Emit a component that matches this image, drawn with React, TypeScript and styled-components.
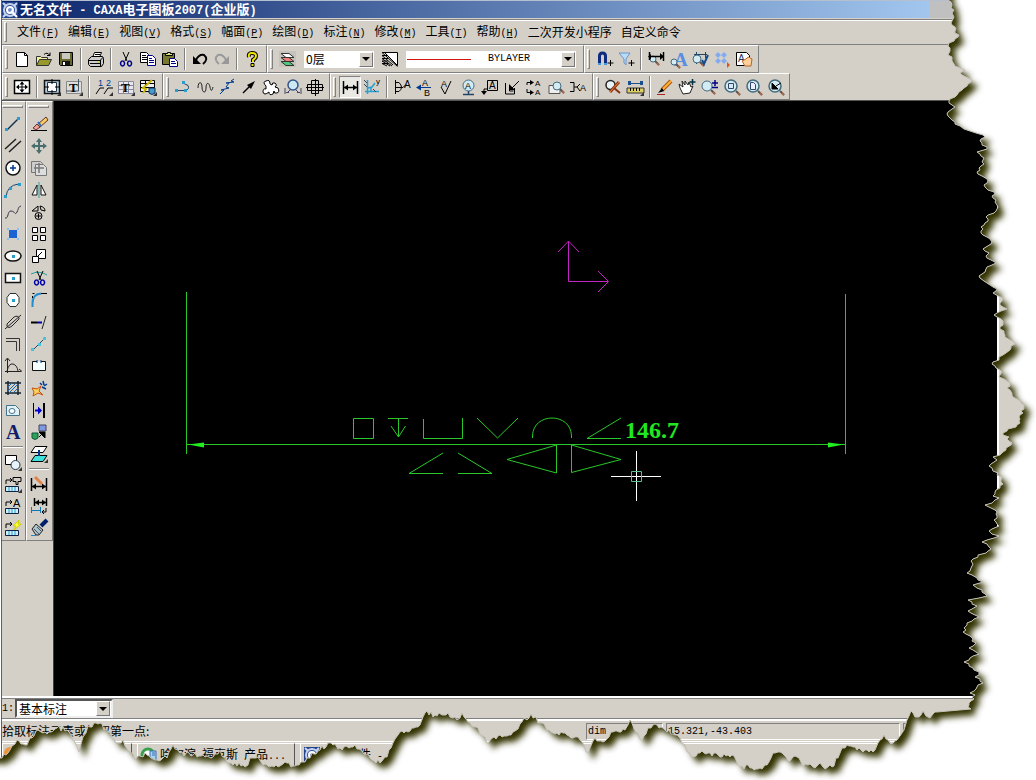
import React from 'react';
import styled, { createGlobalStyle, css } from 'styled-components';

const face = '#d4d0c8';
const shade = '#808080';
const CJK = '"Noto Sans CJK SC", sans-serif';
const MONO = '"Liberation Mono", monospace';

const Global = createGlobalStyle`
  * { box-sizing: border-box; }
  body { margin: 0; background: #fff; font: 12px/16px ${CJK}; color: #000; overflow: hidden; }
`;

/* ---------- icon data: strokes are [path, stroke, fill, width] ---------- */
type Stroke = [string, string?, string?, number?];
type Glyph = { t: string; x: number; y: number; s: number; c?: string; b?: boolean };
type Part = Stroke | Glyph;

const K = '#000';
const N = 'none';
const NAVY = '#003a90';
const CYAN = '#2b9ed0';
const corner: Stroke = ['M17 13v4h-4z', N, '#333'];
const lens = (x: number, y: number, r = 5): Part[] => [
  [`M${x + r - 1} ${y + r - 1}l4 4`, '#555', N, 2],
  [`M${x + r + 1} ${y + r + 1}l2 2`, '#b06a48', N, 2],
  [`M${x - r} ${y}a${r} ${r} 0 1 0 ${2 * r} 0a${r} ${r} 0 1 0 -${2 * r} 0z`, '#456a7c', '#d3ebf2', r > 5 ? 1.5 : 1],
];

const icons: Record<string, Part[]> = {
  new: [['M2.5 1.5h8l3 3v11h-11z', K, '#fff'], ['M10.5 1.5v3h3', K]],
  open: [['M.5 14.5v-9h4l1 1h6v2', '#333', '#f5f0a0'], ['M.5 14.5l3-6h12l-3 6z', '#333', '#98982c'], ['M8 3.5q3-3 6 1m0-3v3h-3', K]],
  save: [['M1.5 1.5h13v13h-12l-1-1z', K, '#68682c'], ['M4 2h8v6H4z', N, '#c8c8c0'], ['M4 10h8v4H4z', N, '#111'], ['M5 11h2v3H5z', N, '#fff']],
  print: [['M4.5 6.5l2-5h7l-2 5', K, '#fff'], ['M7 3.5h5M6 5.5h5', K], ['M.5 8.5l3-3h11l1 2v5l-2 3h-11l-2-2z', K, '#ccc'], ['M1 9.5h11l3-3M2 12.5h10M12.5 9v6', K], ['M9 11h3', '#cc0']],
  cut: [['M5 1l4 9M11 1L7 10', K], ['M4.5 10a2 2.5 0 1 0 .1 0M11.5 10a2 2.5 0 1 0 .1 0', '#008', N, 1.5]],
  copy: [['M.5 1.5h6l2 2v8h-8z', K, '#fff'], ['M2 4.5h4M2 6.5h5M2 8.5h5', K], ['M7.5 4.5h5l3 3v7h-8z', '#008', '#fff'], ['M9 7.5h3M9 9.5h5M9 11.5h5', '#008']],
  paste: [['M.5 2.5h12v11H.5z', K, '#77772e'], ['M3.5 4.5v-2h2v-1h3v1h2v2z', K, '#dd8'], ['M7.5 7.5h5l3 3v5h-8z', '#008', '#fff'], ['M9 10.5h4M9 12.5h5', '#008']],
  undo: [['M1 5v8h8z', N, K], ['M4 9q3-6 8-5q5 4-1 9', K, N, 2]],
  redo: [['M15 5v8H7z', N, '#999'], ['M12 9Q9 3 4 4q-5 4 1 9', '#999', N, 2]],
  help: [['M5 6q-1-4 3-4t4 3q0 2-3 4v2', K, N, 4], ['M5 6q-1-4 3-4t4 3q0 2-3 4v2', '#f2e400', N, 2], ['M7 12.5h3v3H7z', K, '#f2e400']],
  layers: [['M0 0h17v16H0z', N, '#c6c2bc'], ['M2 10.5h8l5 4H7z', '#333', '#4ec878'], ['M2 6.5h8l5 4H7z', '#333', '#f08078'], ['M2 2.5h8l5 4H7z', '#333', '#fff']],
  style: [['M3.5 1.5h13v13z', K, '#fff'], ['M16.5 15.5L1 1.5h4M12 14L1 4.5h6M11 15L1 7.5h6M9 15l-8-5h6M6 15l-5-2.500h6', K]],
  magnet: [['M3.5 13V5q0-3 3-3t3 3v8', '#102c80', N, 3], ['M2 13h3M8 13h3', '#49d', N, 2], ['M14.5 9v6M11.5 12h6', K]],
  filter: [['M1 2h11L8 8v6L6 12V8z', '#6b95cc', '#b9dcf5'], ['M13.5 9v6M10.5 12h6', K]],
  dimStyle: [...lens(5, 8, 3), ['M1.5 1v8M15.5 1v9M2 5.5h13', K, N, 1.5], ['M3 3v5L0 5.5zM12 2v7l4-3.500z', N, K]],
  textStyle: [{ t: 'A', x: 4, y: 15, s: 19, c: '#5a8ee0', b: true }, ...lens(4, 11, 3)],
  checkDim: [['M2 3.5h13M4.5 1v12M13.5 1v6', '#246'], ...lens(5, 8, 4), ['M10 9l2 4 4-9', '#124a90', N, 2]],
  points: [['M4 1l3 3-3 3-3-3zM10 1l3 3-3 3-3-3zM4 7l3 3-3 3-3-3zM10 7l3 3-3 3-3-3z', '#a8c0e4', '#86a9ea'], ['M13 11l3 3-3 3z', N, '#e05020']],
  pageHand: [['M.5 1.5h10l3 3v10H.5z', K, '#fff'], { t: 'A', x: 2, y: 11, s: 10, c: '#236' }, ['M6 10l3 5h6l1-7-2-1-1-1-2 1-1 1z', '#b56528', '#ffd09c']],

  zoomAll: [['M.5 1.5h15v13H.5z', K, '#fff', 1.5], ['M8 3v10M3 8h10', K], ['M5.500 5.5L8 2.500l2.500 3zM5.500 10.500L8 13.500l2.500-3zM5 5.500L2 8l3 2.500zM11 5.500L14 8l-3 2.500z', N, K]],
  frame: [['M.5 1.5h15v13H.5z', '#111', '#b8d0e0', 1.5], ['M3.5 3.5h9v9h-9z', '#234', '#fff'], ['M8 0v5M8 11v5M0 8h5M11 8h5', K], corner],
  titleBlock: [['M.5 2.5h15v12H.5z', '#888', '#ddd'], ['M12.5 0v12H0', '#456'], { t: 'T', x: 3, y: 13, s: 13, b: true }, corner],
  serial: [{ t: '1', x: 2, y: 7, s: 9, c: NAVY }, { t: '2', x: 10, y: 7, s: 9, c: NAVY }, ['M0 15l4-6h4M8 15l4-6h5', K], corner],
  tableText: [['M.5 2.5h15v12H.5zM1 6.5h14M1 10.5h14M5.5 3v11M10.5 3v11', '#889', '#e5e8ec'], { t: 'T', x: 3, y: 13, s: 13, b: true }, corner],
  bom: [['M.5 1.5h14v11H.5zM1 4.5h13M1 8.5h13M5.5 2v10', K, '#eee'], ['M12 1L3 9l3 1-3 4', '#c9b400', N, 2], ['M9 9h6v5q-3 3-6 0z', '#135', '#469ad0'], corner],

  pline: [['M1 11.5h9q5-1 3-5l-4-2', '#246'], ['M0 10h3v3H0zM9 10h3v3H9zM7 2h3v3H7z', N, CYAN]],
  wave: [['M1 9c0-7 4-7 4-1s4 7 4 1 3-6 4-1 2 4 3 0', '#222']],
  breakLine: [['M1 15l4-4H2l8-2-3-1 3-4H7l8-1-3-1 3-2', NAVY]],
  arrow: [['M2 14l8-8', K, N, 1.5], ['M14 2L6 6l4 4z', N, K]],
  gear: [['M3 7q-4-4 0-5 4-2 4 3l2 1q0-3 3-2 3 2 0 4l3 1q2 4-1 5-3 1-3-2l-1 3q-4 2-4-2-5 4-6 0 0-4 3-3z', K, '#fff']],
  hole: [['M3 6a5 5 0 1 0 10 0a5 5 0 1 0-10 0z', '#358', '#cdeaf4', 1.5], ['M0 9v6M16 9v6M1 13.5h3M12 13.500h3M3 13l3-3M13 13l-3-3', '#446']],
  block: [['M.5 5.5h15v6H.5zM4.5 1.5h7v13h-7z', K], ['M-1 8.5h18M8.5 0v17', K]],

  dimension: [['M1.5 2v13M15.5 2v13M2 8.5h13', K, N, 1.5], ['M2 8.5l4-3v6zM15 8.5l-4-3v6z', N, K]],
  coordDim: [['M3.5 1v14M1 12.5h14M4 9l4-1 3-4M7 13V8', CYAN, N, 1.5], ['M0 1l3 3M0 5l3 3M9 10l3 3', '#345'], { t: 'y', x: 12, y: 5, s: 8 }],
  datum: [['M1.5 1v14M2 3.5h3q5 5 0 9H2M2 8.500h7l3-3', K], { t: 'A', x: 10, y: 9, s: 10 }],
  weld: [{ t: 'A', x: 6, y: 7, s: 9 }, { t: 'B', x: 8, y: 17, s: 9 }, ['M2 8.5h13', NAVY], ['M0 8.5l5-3v6z', N, NAVY]],
  rough: [['M3 8l4 7L13 2', K], { t: 'A', x: 3, y: 8, s: 9 }],
  tolerance: [['M3 6.500a5.500 5.500 0 1 0 11 0a5.500 5.500 0 1 0-11 0z', '#456a7c', '#d3ebf2'], { t: 'A', x: 5, y: 10, s: 9 }, ['M8.5 12v3M3 15.5h11', '#246', N, 1.5]],
  datumBox: [['M5.5 1.5h10v10h-10zM5 10H2v5', K], { t: 'A', x: 7, y: 10, s: 10 }, ['M-1 12h6l-3 4z', N, K]],
  surface: [['M1.5 4v11h9V9M5.5 6v6h4M15 2l-8 8', K], ['M5 11V5l6 6z', N, K]],
  replace: [['M1 6V3.5h4M1 10v3.500h4', K, N, 1], ['M4 1l4 2.500L4 6zM4 11l4 2.500L4 16z', N, K], { t: 'A', x: 9, y: 7, s: 8 }, { t: 'A', x: 9, y: 16, s: 8 }],
  find: [['M1 6.5h11v8H1z', '#555', '#eee'], ...lens(9, 7, 4)],
  editDim: [['M0 3.5h4v9H0M4 8h3m3-3L7 8l3 4', K], { t: 'A', x: 10, y: 12, s: 9 }],
  inspect: [['M1 6a4.500 4.500 0 1 0 9 0a4.500 4.500 0 1 0-9 0z', '#222', '#e8f4f8', 1.5], ['M5 13l9-10', '#8e3410', N, 3], ['M5 13l9-10', '#ee8640'], ['M9 9l6 5', '#8a3010', N, 2]],
  ruler: [['M2 4.5h13', '#17508c'], ['M1 2h3v4H1zM13 2h3v4h-3z', N, '#17508c'], ['M0 9h17v5H0z', '#333', '#ded060'], ['M3.5 9v3M6.5 9v3M9.5 9v3M12.5 9v3', K], corner],
  pen: [['M14 2L5 11', '#a85808', N, 4], ['M14 2L5 11', '#ffb03a', N, 2], ['M5 9L1 14l6-2z', N, K], ['M0 15.5h8', '#a22']],
  pan: [['M4 15L1 9l-1-4 4 3-1-6 3 4V2l3 4 1-3 2 5 2-1-3 7z', '#222', '#fff'], ['M13.5 0v6M10.5 3h6', '#034', N, 1.5]],
  zoomPM: [...lens(6, 7, 5), ['M14 1v6M11 4h6M11 8.5h6', '#008', N, 1.5]],
  zoomWin: [...lens(8, 7, 6), ['M5.5 4.5h5v5h-5z', '#346']],
  zoomPage: [...lens(8, 7, 6), ['M5.5 3.5h3l2 2v5h-5z', '#346', '#eef']],
  zoomPrev: [...lens(8, 7, 6), ['M5 4v6h6zM9 7l5-3', K, K]],

  line: [['M2 14L14 2', '#12304e', N, 1.5], ['M0 12h3v3H0zM12 1h3v3h-3z', N, CYAN]],
  parallel: [['M0 11L11 1M4 14L16 3', '#222', N, 1.5]],
  circle: [['M1 8a7 7 0 1 0 14 0a7 7 0 1 0-14 0z', '#111', '#fff', 1.5], ['M8 5v6M5 8h6', NAVY, N, 1.5]],
  arc: [['M1 15Q2 3 14 2', '#246'], ['M-1 13h3v3h-3zM4 5h3v3H4zM13 1h3v3h-3z', N, CYAN]],
  spline: [['M0 14C4 15 2 7 6 7S10 12 12 8 13 3 16 2', '#334']],
  point: [['M4 4h8v8H4z', N, '#1d62d2'], ['M2 2h2v2H2zM12 2h2v2h-2zM2 12h2v2H2zM12 12h2v2h-2z', N, '#8ac0f0']],
  ellipse: [['M0 8a8 5 0 1 0 16 0a8 5 0 1 0-16 0z', '#111', '#fff', 1.5], ['M7 7h3v3H7z', N, CYAN]],
  rect: [['M.5 3.5h15v9H.5z', '#111', '#fff', 1.5], ['M7 7h3v3H7z', N, CYAN]],
  polygon: [['M5 1.500h6l3 4v5l-3 4H5l-3-4v-5z', '#233', '#fff'], ['M7 7h3v3H7z', N, CYAN]],
  slot: [['M2 10L9 3q4-2 5 1v1l-7 7q-4 3-5 0z', '#222'], ['M0 15L16 1', '#222']],
  offset: [['M1 2.5h13.5V15M1 5.5h10.5V15', '#333']],
  axis: [['M2.5 1v14M0 13.5h16M0 3l2.500-3L5 3M14 11l3 2.500M2 13Q4 5 8 6t5 7', '#222']],
  hatch: [['M3 1v14M13 1v14M0 3h16M0 13h16', '#123', '#c6e8f0', 1.5], ['M3 7l4-4M3 11l8-8M4 13l9-9M8 13l5-5', '#1d68b0']],
  region: [['M1.5 3.5h9l4 4v6h-13z', '#44748b', '#dff0f6'], ['M4 9a3 2.500 0 1 0 6 0a3 2.500 0 1 0-6 0z', '#44748b', '#fff']],
  text: [{ t: 'A', x: 1, y: 15, s: 20, c: '#101c68', b: true }],
  shapes: [['M.5 1.5h11v9H.5z', K, '#fff'], ['M6 11a4 4 0 1 0 9 0a4 4 0 1 0-9 0z', '#234', '#e8f4fa'], corner],
  libPart: [['M1 8V4h6M8 1.500h8v4h-3v3h-2v-3H8zM5 2l2 2-2 2', K], ['M.5 10.5h13v5H.5z', '#124', '#cdeefa'], ['M4 11v4M7 11v4M10 11v4', CYAN], corner],
  libText: [['M1 8V4h6M5 2l2 2-2 2', K], { t: 'A', x: 8, y: 9, s: 11 }, ['M.5 10.5h13v5H.5z', '#124', '#cdeefa'], ['M4 11v4M7 11v4M10 11v4', CYAN]],
  libQuick: [['M1 8V4h6M5 2l2 2-2 2', K], ['M14 0L8 6h3l-2 4 7-6h-3z', '#cc0', '#ff3'], ['M.5 10.5h13v5H.5z', '#124', '#cdeefa'], ['M4 11v4M7 11v4M10 11v4', CYAN]],

  erase: [['M0 14.5h16', K], ['M15 1L6 9l2 3 9-8z', '#533', '#ffc95c'], ['M6 8l-4 4 3 2 4-3z', '#633', '#f0a090'], ['M7 6l3 4', '#2a6ac8', N, 2]],
  move: [['M8 2v12M2 8h12', '#4a6e70', N, 2], ['M5 4l3-4 3 4zM5 12l3 4 3-4zM4 5L0 8l4 3zM12 5l4 3-4 3z', N, '#4a6e70']],
  copyMove: [['M.5 1.5h9l2 2v9H.5z', '#777', '#ccc'], ['M4.5 4.5h8l3 3v8h-11z', '#777', '#ddd'], ['M8 3v10M3 8h10', '#777', N, 1.5]],
  mirror: [['M8 0v16', '#2a9f9f'], ['M6 3v10H1zM10 3v10h5z', '#111', '#fff']],
  rotate: [['M1 7l6-5v5zM9 2q5 1 5 5l-4-1z', K], ['M4 12a3.500 3.500 0 1 0 7 0a3.500 3.500 0 1 0-7 0zM5 12h5M7.500 9.500v5', K]],
  array: [['M1.5 1.5h5v5h-5zM9.5 1.5h5v5h-5zM1.5 9.5h5v5h-5zM9.5 9.5h5v5h-5z', K, '#fff']],
  scale: [['M5.5 1.5h9v9h-9z', K, '#fff'], ['M1.5 8.5h6v6h-6z', K, '#fff'], ['M7 8l4-4', K]],
  trim: [['M0 4q8-4 16 1', '#2a9f9f'], ['M6 1l4 9M12 1L8 10', K], ['M5.5 10a2 2.500 0 1 0 .1 0M11.500 10a2 2.500 0 1 0 .1 0', '#00a', N, 1.5]],
  fillet: [['M1.5 15V11q0-9 9-9.500', '#248ccc', N, 2], ['M10 1.5h6M1.500 1.500h2M1.500 4v2', K]],
  extend: [['M0 8.5h6', K, N, 2], ['M6 8.5h5', '#00a', N, 2], ['M15 2l-4 13', '#222']],
  breakAt: [['M2 14L14 2', '#246'], ['M0 12h3v3H0zM7 7h3v3H7zM12 1h3v3h-3z', N, '#48c3dc']],
  gap: [['M6 3.5H1.500v9h13v-9H10', '#111', '#f5ffff'], ['M6 2v3M10 2v3', NAVY]],
  explode: [['M1 8l5 1 4-3-2 5 4 4-5-2-5 3 1-4z', '#c84e10', '#ffd25a'], ['M9 3l2 2M12 1l1 4M16 4l-3 2M11 7l4 2', NAVY, N, 1.5]],
  stretch: [['M2.5 1v15', K], ['M4 8.5h6', '#00c', N, 2], ['M7 4.500l4 4-4 4z', N, '#00c'], ['M13 1v15', K, N, 2]],
  props: [['M1 9h6v5q-3 3-6 0z', '#154', '#2da455'], ['M8 1h7v6H8z', '#446', '#809ae0'], ['M8 13l4-4M14 8v6L8 8z', K, K]],
  level: [['M4 .5h12l-4 6H0z', K, '#fff'], ['M4 9.5h12l-4 6H0z', K, '#40e0dc'], ['M8 4v6', NAVY, N, 2], corner],
  dimEdit: [['M.5 2v13M15.5 2v13M1 10.5h14', K, N, 1.5], ['M1 10.500l4-3v6zM15 10.500l-4-3v6z', N, K], ['M4 1l7 7', '#e0854a', N, 3]],
  dimMove: [['M3.5 0v8M15.5 0v8M4 4.5h11', K, N, 1.5], ['M4 4.500l4-3v6zM15 4.500l-4-3v6z', N, K], ['M0 12.5h9M.5 9v6M9.5 9v6', '#17b'], ['M15 10v4h-4m2-2l-2 2 2 2', K]],
  brush: [['M16 0l-6 6', '#00206c', N, 4], ['M5 4l7 6-4 5H5L1 9z', '#222', '#aec0c8'], ['M3 9l5 5M6 7l4 4', '#456'], ['M0 15.5h5', '#28c']],
};

const IconSvg = styled.svg`
  display: block;
  flex: none;
  width: 16px;
  height: 16px;
  overflow: visible;
`;

const Icon = ({ name }: { name: string }) => (
  <IconSvg viewBox="0 0 16 16" aria-hidden="true">
    {icons[name].map((p, i) =>
      Array.isArray(p) ? (
        <path key={i} d={p[0]} stroke={p[1] ?? K} fill={p[2] ?? N} strokeWidth={p[3] ?? 1} />
      ) : (
        <text key={i} x={p.x} y={p.y} fontSize={p.s} fill={p.c ?? K} fontWeight={p.b ? 700 : 400} fontFamily={p.s > 11 ? 'Liberation Serif' : 'Liberation Sans'}>
          {p.t}
        </text>
      ),
    )}
  </IconSvg>
);

/* ---------- frame ---------- */
const Desk = styled.div`
  position: relative;
  height: 100vh;
  overflow: hidden;
`;
const Shell = styled.div`
  display: flex;
  flex-direction: column;
  height: 100%;
  margin-left: 1px;
  border-left: 1px solid #606060;
  background: ${face};
`;
const TitleBar = styled.header`
  display: flex;
  align-items: center;
  height: 19px;
  padding-right: 106px;
  border-top: 1px solid #b4c0d0;
  border-bottom: 1px solid ${face};
  background: #c0c0c0;
`;
const TitleFill = styled.h1`
  display: flex;
  align-items: center;
  gap: 2px;
  flex: 1;
  height: 17px;
  margin: 0;
  background: linear-gradient(90deg, #0a246a, #a2c6ee);
  color: #fff;
  font: bold 13px/17px ${CJK};
  white-space: pre;
`;
const Latin = styled.span<{ $size?: number }>`
  font-family: ${MONO};
  font-size: ${(p) => p.$size ?? 10}px;
  white-space: pre;
`;
const MenuBar = styled.nav`
  display: flex;
  align-items: center;
  gap: 9px;
  height: 26px;
  border: solid;
  border-width: 1px 0;
  border-color: ${shade};
  box-shadow: inset 0 1px #fff;
`;
const Grip = styled.i<{ $flat?: boolean }>`
  flex: none;
  ${(p) => (p.$flat ? css`height: 3px; margin: 3px 1px 5px 0;` : css`width: 3px; height: 20px; margin-right: 3px;`)}
  border: 1px solid;
  border-color: #fff ${shade} ${shade} #fff;
`;
const MenuGrip = styled(Grip)`
  margin: 0 1px 0 2px;
`;
const MenuButton = styled.button`
  border: 0;
  padding: 0;
  background: none;
  color: #000;
  font: 12px/20px ${CJK};
  white-space: nowrap;
`;
const ToolRow = styled.div<{ $ruled?: boolean }>`
  display: flex;
  height: 28px;
  ${(p) => p.$ruled && css`border-bottom: 1px solid #555;`}
`;
const Bar = styled.div`
  display: flex;
  align-items: center;
  padding: 0 3px 0 2px;
  border: 1px solid;
  border-color: #fff ${shade} ${shade} #fff;
`;
const Column = styled.div<{ $first?: boolean }>`
  display: flex;
  flex-direction: column;
  padding: 0 2px 1px ${(p) => (p.$first ? 0 : 1)}px;
  border: 1px solid;
  border-color: #fff ${shade} ${shade} #fff;
  ${(p) => p.$first && css`border-left: 0; padding-right: 1px;`}
`;
const Tool = styled.button<{ $on?: boolean }>`
  display: grid;
  place-items: center;
  flex: none;
  width: 22px;
  height: 22px;
  padding: 0;
  border: 1px solid transparent;
  background: none;
  ${(p) => p.$on && css`
    border-color: ${shade} #fff #fff ${shade};
    background: #eae8e3;
  `}
`;
const Split = styled.i<{ $flat?: boolean }>`
  flex: none;
  background: ${shade};
  ${(p) => (p.$flat
    ? css`height: 1px; margin: 3px 1px 4px; box-shadow: 0 1px #fff;`
    : css`width: 1px; height: 22px; margin: 0 4px 0 3px; box-shadow: 1px 0 #fff;`)}
`;

const Combo = styled.div<{ $w: number; $sunken?: boolean }>`
  display: flex;
  align-items: center;
  width: ${(p) => p.$w}px;
  height: 17px;
  background: #fff;
  ${(p) => p.$sunken
    ? css`height: 19px; border: 2px solid; border-color: #555 #eee #eee #555;`
    : css`margin: 0 4px 0 6px;`}
`;
const Choice = styled.select<{ $latin?: boolean }>`
  flex: 1;
  min-width: 0;
  height: 16px;
  padding: 0 2px;
  border: 0;
  background: none;
  color: #000;
  appearance: none;
  font: 12px/16px ${CJK};
  ${(p) => p.$latin && css`font: 10px/16px ${MONO}; padding-left: 16px;`}
`;
const Arrow = styled.span`
  display: grid;
  place-items: center;
  width: 14px;
  height: 15px;
  margin-right: 1px;
  background: ${face};
  border: 1px solid;
  border-color: #fff #777 #777 #fff;
  &::after {
    content: '';
    border: 4px solid transparent;
    border-top-color: #000;
    border-bottom: 0;
  }
`;
const LineSample = styled.i`
  width: 64px;
  height: 1px;
  margin: 0 1px;
  background: #d01410;
`;

const Work = styled.div`
  display: flex;
  flex: 1;
  min-height: 0;
`;
const Dock = styled.aside`
  display: flex;
  align-items: flex-start;
  border-right: 1px solid #404040;
`;
const Canvas = styled.main`
  flex: 1;
  min-width: 0;
  background: #000;
`;
const Drawing = styled.svg`
  display: block;
  width: 100%;
  height: 100%;
`;
const ScrollTrack = styled.div`
  width: 39px;
  border-left: 2px solid #fff;
`;
const OptionRow = styled.div`
  display: flex;
  align-items: center;
  height: 23px;
  padding-top: 2px;
  border-top: 1px solid #fff;
  border-bottom: 1px solid ${shade};
  box-shadow: inset 0 1px #fff, inset 0 2px ${shade};
`;
const OptionLabel = styled.label`
  width: 13px;
  font: 10px/16px ${MONO};
`;
const StatusRow = styled.footer`
  display: flex;
  align-items: center;
  height: 22px;
  border-top: 2px solid #fff;
`;
const Prompt = styled.span`
  flex: 1;
`;
const Pane = styled.span<{ $w: number }>`
  width: ${(p) => p.$w}px;
  height: 17px;
  margin-right: 3px;
  padding-left: 1px;
  border: 1px solid;
  border-color: ${shade} #fff #fff ${shade};
  font: 10px/15px ${MONO};
`;
const TaskBar = styled.div`
  display: flex;
  gap: 5px;
  height: 39px;
  padding-top: 1px;
  border-top: 1px solid #fff;
  box-shadow: inset 0 1px ${face}, inset 0 2px #fff;
`;
const Task = styled.button<{ $w: number }>`
  display: flex;
  align-items: center;
  gap: 3px;
  width: ${(p) => p.$w}px;
  height: 24px;
  padding: 0 3px;
  border: 1px solid;
  border-color: #fff #555 #555 #fff;
  background: ${face};
  color: #000;
  font: 12px/16px ${CJK};
  white-space: nowrap;
  overflow: hidden;
`;
const TornEdge = styled.svg`
  position: absolute;
  inset: 0;
  width: 100%;
  height: 100%;
  pointer-events: none;
`;

const AppLogo = () => (
  <IconSvg viewBox="0 0 16 16" aria-hidden="true">
    <rect width="16" height="16" fill="#23448c" />
    <path d="M1 1l3 3M15 1l-3 3M1 15l3-3" stroke="#c8d8f4" strokeWidth="2" />
    <circle cx="8" cy="8" r="6" fill="#2d529c" stroke="#c6d2ee" strokeWidth="2" />
    <circle cx="8" cy="8" r="3" fill="#6d8cc8" stroke="#fff" strokeWidth="2" />
    <path d="M9 9l6 6" stroke="#fff" strokeWidth="2" />
  </IconSvg>
);
const BrowserLogo = () => (
  <IconSvg viewBox="0 0 16 16" aria-hidden="true">
    <circle cx="7" cy="8" r="6" fill="#fff" stroke="#38a048" strokeWidth="3" />
    <path d="M9 4h6v10H9zM11 6h3M11 8h3" fill="#a5d2ee" stroke="#3a6eb4" />
  </IconSvg>
);
const StartLogo = () => (
  <IconSvg viewBox="0 0 16 16" aria-hidden="true">
    <circle cx="4" cy="6" r="6" fill="#f0943c" />
    <path d="M9 2l3 8" stroke="#3aa04a" strokeWidth="3" />
  </IconSvg>
);

/* "|" in a list stands for a separator */
const Tools = ({ names, flat, active }: { names: string; flat?: boolean; active?: string }) => (
  <>
    {names.split(' ').map((n, i) =>
      n === '|' ? <Split key={i} $flat={flat} /> : (
        <Tool key={i} aria-label={n} $on={n === active}><Icon name={n} /></Tool>
      ),
    )}
  </>
);

const menus: [string, string?][] = [
  ['文件', 'F'], ['编辑', 'E'], ['视图', 'V'], ['格式', 'S'], ['幅面', 'P'], ['绘图', 'D'],
  ['标注', 'N'], ['修改', 'M'], ['工具', 'T'], ['帮助', 'H'], ['二次开发小程序'], ['自定义命令'],
];

/* ---------- torn paper outline ---------- */
const rightEdge = [
  948, 0, 951, 2, 952, 5, 954, 10, 952, 13, 953, 19, 952, 25, 955, 31, 959, 35, 955, 39, 949, 43, 950, 48, 949, 53, 952, 61, 955, 66, 965, 70, 960, 73, 972, 80, 967, 86, 959, 92, 955, 97, 949, 101, 955, 107, 947, 114, 952, 120, 960, 126, 970, 131, 983, 135, 982, 145, 987, 149, 977, 152, 983, 160, 980, 170, 978, 174, 988, 181, 985, 187, 994, 192, 992, 196, 996, 200, 997, 209, 986, 217, 988, 219, 981, 227, 981, 233, 990, 239, 991, 244, 983, 249, 989, 253, 986, 256, 996, 263, 987, 267, 979, 276, 987, 283, 997, 289, 993, 293, 1003, 298, 1000, 303, 1007, 309, 994, 315, 1003, 321, 1000, 327, 1005, 337, 1014, 342, 1010, 350, 1003, 355, 992, 364, 1000, 370, 999, 377, 1010, 383, 1007, 388, 1012, 395, 1024, 407, 1023, 413, 1017, 425, 1003, 433, 1012, 443, 1003, 452, 993, 457, 997, 460, 989, 466, 998, 473, 1003, 484, 1000, 488, 993, 496, 999, 498, 985, 505, 997, 512, 994, 520, 999, 526, 989, 531, 999, 536, 982, 542, 991, 549, 973, 559, 972, 566, 967, 573, 983, 582, 973, 585, 982, 590, 987, 596, 968, 600, 977, 606, 968, 611, 979, 617, 967, 623, 963, 632, 976, 643, 969, 648, 979, 654, 964, 662, 973, 668, 979, 672, 975, 677, 983, 683, 970, 693, 975, 695, 969, 705, 971, 709,
];
const bottomEdge = [
  937, 712, 928, 717, 923, 711, 917, 717, 911, 711, 907, 720, 904, 730, 893, 743, 888, 740, 884, 735, 880, 740, 873, 752, 863, 752, 853, 747, 847, 745, 840, 753, 832, 767, 823, 767, 820, 763, 815, 768, 810, 764, 803, 767, 797, 757, 788, 761, 780, 752, 773, 753, 767, 765, 760, 768, 740, 767, 732, 755, 720, 757, 710, 753, 698, 753, 693, 757, 687, 752, 680, 738, 677, 735, 665, 730, 653, 725, 648, 728, 642, 740, 638, 733, 630, 720, 625, 730, 613, 732, 603, 742, 595, 738, 588, 753, 580, 740, 573, 738, 563, 733, 553, 733, 540, 723, 531, 714, 522, 722, 513, 732, 500, 735, 487, 743, 478, 728, 470, 723, 462, 713, 457, 720, 448, 713, 435, 715, 425, 713, 420, 725, 408, 732, 400, 732, 393, 743, 387, 757, 380, 763, 370, 758, 355, 745, 340, 748, 333, 745, 328, 743, 320, 750, 312, 753, 305, 762, 293, 766, 285, 762, 278, 767, 263, 765, 258, 757, 250, 758, 245, 767, 235, 763, 227, 762, 220, 750, 213, 757, 203, 755, 193, 755, 180, 753, 173, 745, 167, 758, 157, 760, 147, 755, 138, 756, 135, 760, 130, 752, 123, 740, 118, 743, 108, 732, 100, 723, 88, 726, 83, 737, 79, 752, 73, 740, 67, 730, 57, 728, 43, 733, 36, 731, 32, 738, 25, 745, 17, 740, 10, 750, 0, 758,
];
/* walks the outline in 2px steps and adds small notches across its direction */
const roughen = (pts: number[], across: 'x' | 'y', start = 0) => {
  const out: string[] = [];
  let seed = 7 + start;
  for (let i = 0; i < pts.length - 2; i += 2) {
    const [x0, y0, x1, y1] = pts.slice(i, i + 4);
    const steps = Math.max(1, Math.floor(Math.abs(across === 'x' ? y1 - y0 : x1 - x0) / 2));
    for (let s = 0; s < steps; s++) {
      seed = (seed * 16807) % 2147483647;
      const j = s === 0 ? 0 : (seed % 5) - 2;
      const x = Math.round(x0 + ((x1 - x0) * s) / steps) + (across === 'x' ? j : 0);
      const y = Math.round(y0 + ((y1 - y0) * s) / steps) + (across === 'y' ? j : 0);
      out.push(`${x} ${y}`);
    }
  }
  out.push(`${pts[pts.length - 2]} ${pts[pts.length - 1]}`);
  return out.join('L');
};
const tear = `${roughen(rightEdge, 'x')}L${roughen(bottomEdge, 'y', 40)}`;
const sheet = `M0 -30H948L${tear}L-30 758V-30z`;
const outside = `M-10 -10H1060V800H-10z M-9 -9H948L${tear}L-9 758z`;

export default function App() {
  return (
    <Desk>
      <Global />
      <Shell>
        <TitleBar>
          <TitleFill>
            <AppLogo />
            <span>
              无名文件<Latin $size={12}> - CAXA</Latin>电子图板<Latin $size={12}>2007(</Latin>企业版<Latin $size={12}>)</Latin>
            </span>
          </TitleFill>
        </TitleBar>
        <MenuBar>
          <MenuGrip />
          {menus.map(([label, key]) => (
            <MenuButton key={label}>
              {label}
              {key && <Latin>(<u>{key}</u>)</Latin>}
            </MenuButton>
          ))}
        </MenuBar>
        <ToolRow>
          <Bar><Grip /><Tools names="new open save | print | cut copy paste | undo redo | help" /></Bar>
          <Bar>
            <Grip /><Tools names="layers" />
            <Combo $w={70}>
              <Choice aria-label="图层"><option>0层</option></Choice><Arrow />
            </Combo>
            <Tools names="style" />
            <Combo $w={170}>
              <LineSample />
              <Choice $latin aria-label="线型"><option>BYLAYER</option></Choice><Arrow />
            </Combo>
          </Bar>
          <Bar><Grip /><Tools names="magnet filter | dimStyle textStyle checkDim points pageHand" /></Bar>
        </ToolRow>
        <ToolRow $ruled>
          <Bar><Grip /><Tools names="zoomAll | frame titleBlock | serial tableText bom" /></Bar>
          <Bar><Grip /><Tools names="pline wave breakLine arrow gear hole block" /></Bar>
          <Bar><Grip /><Tools active="dimension" names="dimension coordDim | datum weld rough tolerance datumBox surface replace find editDim" /></Bar>
          <Bar><Grip /><Tools names="inspect ruler | pen pan zoomPM zoomWin zoomPage zoomPrev" /></Bar>
        </ToolRow>
        <Work>
          <Dock>
            <Column $first>
              <Grip $flat />
              <Tools flat names="line parallel circle arc spline point ellipse rect polygon slot offset axis hatch region text | shapes libPart libText libQuick" />
            </Column>
            <Column>
              <Grip $flat />
              <Tools flat names="erase move copyMove mirror rotate array scale trim fillet extend breakAt gap explode stretch props level | dimEdit dimMove brush" />
            </Column>
          </Dock>
          <Canvas>
            <Drawing fill="none">
              <g transform="translate(-54 -101)">
                <g stroke="#28c828">
                  <path d="M186.500 292V454M845.500 294V454M187 444.500H845" />
                  <path d="M353.500 418.500h20v20h-20zM388 418.500h20M398.500 419v18M391 426l7.500 11 7-11M423.500 419v19.500h39V418M477 418l20.500 20L518 418M532.500 438v-2C533 412 571 412 571.500 436v2M621 418l-34 20.500h34" />
                  <path d="M443 453l-34 20.500h34M458 453l34 20.500h-34M556.500 445v28L507 459.500zM571.500 445v27.500L621 459.500z" />
                </g>
                <path d="M188 444.500l16-2v5zM844 444.500l-16-2v5z" fill="#20f020" />
                <text x="625" y="438" fontSize="24" fontWeight="700" fill="#20e820" fontFamily="'Liberation Serif', serif">146.7</text>
                <path d="M568.500 281.500v-40M558 252l10.500-11L579 252M568.500 281.500h40M598 271l10.500 10.500L598 292" stroke="#c424c4" />
                <path d="M611 476.500h50M636.500 451v50" stroke="#fff" />
                <path d="M631.500 471.500h10v10h-10z" stroke="#58c088" />
              </g>
            </Drawing>
          </Canvas>
          <ScrollTrack />
        </Work>
        <OptionRow>
          <OptionLabel htmlFor="mode">1:</OptionLabel>
          <Combo $w={98} $sunken>
            <Choice id="mode"><option>基本标注</option></Choice><Arrow />
          </Combo>
        </OptionRow>
        <StatusRow>
          <Prompt>拾取标注元素或拾取第一点:</Prompt>
          <Pane $w={77}>dim</Pane>
          <Pane $w={234}>15.321,-43.403</Pane>
          <Pane $w={130} />
        </StatusRow>
        <TaskBar>
          <Task $w={130} aria-label="开始"><StartLogo /></Task>
          <Task $w={158}><BrowserLogo /><span>哈尔滨<Latin> </Latin>福克斯<Latin> </Latin>产品<Latin>...</Latin></span></Task>
          <Task $w={158}><AppLogo /><span>无名文件<Latin> - CAXA...</Latin></span></Task>
        </TaskBar>
      </Shell>
      <TornEdge viewBox="0 0 1036 780" preserveAspectRatio="none" aria-hidden="true">
        <defs>
          <clipPath id="off-sheet"><path d={outside} clipRule="evenodd" /></clipPath>
          <filter id="soft" x="-5%" y="-5%" width="110%" height="110%"><feGaussianBlur stdDeviation="3" /></filter>
        </defs>
        <g clipPath="url(#off-sheet)">
          <rect width="1036" height="780" fill="#fff" />
          <path d={sheet} transform="translate(6 6)" fill="#333200" filter="url(#soft)" />
        </g>
        <path d={`M948 0L${tear}`} fill="none" stroke="#c4c1b8" />
      </TornEdge>
    </Desk>
  );
}
